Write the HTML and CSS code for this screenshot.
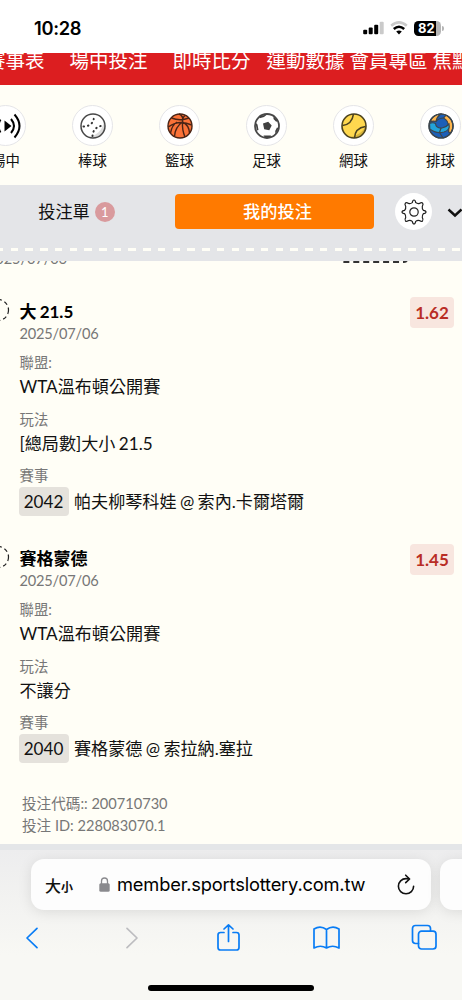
FILE: index.html
```html
<!DOCTYPE html>
<html lang="zh-Hant">
<head>
  <meta charset="UTF-8">
  <title>我的投注</title>
  <link rel="stylesheet" href="styles.css">
</head>
<body>

  <header class="status">
    <span class="time">10:28</span>
    <div class="status-icons">
      <svg width="21" height="14" viewBox="0 0 21 14">
        <rect x="0.2" y="8.8" width="4" height="4.4" rx="1"/>
        <rect x="5.7" y="6.4" width="4" height="6.8" rx="1"/>
        <rect x="11.2" y="3.7" width="4" height="9.5" rx="1"/>
        <rect x="16.7" y="0.8" width="4" height="12.4" rx="1" fill="#cacaca"/>
      </svg>
      <svg width="18" height="14" viewBox="0 0 18 14" fill="none">
        <path d="M1.2 4.8Q9 -2 16.8 4.8" stroke="#cacaca" stroke-width="2.5"/>
        <path d="M3.8 8Q9 3.6 14.2 8" stroke="#000" stroke-width="2.5"/>
        <path d="M6.2 10.6Q9 8.4 11.8 10.6L9 13.4Z" fill="#000"/>
      </svg>
      <div class="battery">82</div>
    </div>
  </header>

  <nav class="menu">
    <span>賽事表</span>
    <span>場中投注</span>
    <span>即時比分</span>
    <span class="tight">運動數據</span>
    <span class="tight">會員專區</span>
    <span>焦點</span>
  </nav>

  <section class="sports">
    <div class="sport">
      <div class="ball">
        <svg width="32" height="26" viewBox="0 0 32 26" fill="none" stroke="#000" stroke-width="2">
          <path d="M14.5 7.5V18.5L21.5 13Z" fill="#000" stroke="none"/>
          <path d="M10.5 6.5Q6.5 13 10.5 19.500M7 3Q1 13 7 23M21 6Q27 13 21 20M24.500 1.500Q34.500 13 24.500 24.500"/>
        </svg>
      </div>
      <span>場中</span>
    </div>
    <div class="sport">
      <div class="ball">
        <svg width="26" height="26" viewBox="0 0 26 26" fill="none">
          <circle cx="13" cy="13" r="12" fill="#fff"/>
          <path d="M24 8A12 12 0 0 1 9 24Q22 21 24 8" fill="#ddd"/>
          <circle cx="13" cy="13" r="12" stroke="#484848" stroke-width="1.5"/>
          <path d="M3.5 13.5Q14 13 14 3M12.5 23Q13 14 23 12.5" stroke="#333" stroke-width="2" stroke-linecap="round" stroke-dasharray="0.5 4"/>
        </svg>
      </div>
      <span>棒球</span>
    </div>
    <div class="sport">
      <div class="ball">
        <svg width="26" height="26" viewBox="0 0 26 26" fill="none" stroke="#4a2416" stroke-width="1.4">
          <circle cx="13" cy="13" r="12" fill="#fb7238"/>
          <path d="M4.5 5Q13 8.5 22 5M1.2 14Q12 6 24.8 12M12 1Q17 3 15.5 9Q15 17 18 24M15.5 9Q8 14 7.5 23.5M3.5 20Q5 12 10 9M15.5 9Q22 12 22.5 20M18 2.5Q15 5 15.5 9"/>
        </svg>
      </div>
      <span>籃球</span>
    </div>
    <div class="sport">
      <div class="ball">
        <svg width="26" height="26" viewBox="0 0 26 26">
          <circle cx="13" cy="13" r="12" fill="#fff" stroke="#484848" stroke-width="1.8"/>
          <path d="M9 10.5L14.2 8.7L17.7 12.6L15.3 17.2L10.2 16.2ZM6 3.2L13.3 1.3L10 3.900L5.700 5.300ZM19.500 3.200L23.700 8L22.200 8.700L19.500 6ZM24.600 15L21.500 21.500L21.200 18L23 14.500ZM16.500 22.500L18.500 23.500L11 24.800L9.500 22.500ZM1.500 9.500L3.500 11.500L4.500 17L2.800 17.500Z" fill="#404040"/>
        </svg>
      </div>
      <span>足球</span>
    </div>
    <div class="sport">
      <div class="ball">
        <svg width="26" height="26" viewBox="0 0 26 26" fill="none">
          <circle cx="13" cy="13" r="12" fill="#ffd84f"/>
          <path d="M25 12A12 12 0 0 1 9 24Q21 22 25 12" fill="#d8b53c"/>
          <path d="M1.5 12.5Q11 11.5 12.5 1M24.5 13.5Q14 15 13.5 25" stroke="#4b421f" stroke-width="1.6"/>
          <circle cx="13" cy="13" r="12" stroke="#4b421f" stroke-width="1.6"/>
        </svg>
      </div>
      <span>網球</span>
    </div>
    <div class="sport">
      <div class="ball">
        <svg width="26" height="26" viewBox="0 0 26 26" stroke="#3c464e" stroke-width="1.2">
          <circle cx="13" cy="13" r="12" fill="#1c5fb8"/>
          <path d="M3.500 6Q7 1.500 12.500 1Q8.500 4.500 8 8.500Q5 7.500 2.300 9Z" fill="#ffb64d"/>
          <path d="M15.500 5Q22 8 20.500 19L23 19.500A12 12 0 0 0 18 2.200Z" fill="#ffb64d"/>
          <path d="M1.500 10.500Q5 9 7.500 10.500Q8 15.500 14 15Q18 14.500 21 11Q22.500 17 16 19Q8 21 1.800 16Z" fill="#22a3da"/>
          <path d="M8 8.500Q11 5 15.500 5M13 15L11.500 19.500L15 24.800" fill="none"/>
          <circle cx="13" cy="13" r="12" fill="none"/>
        </svg>
      </div>
      <span>排球</span>
    </div>
  </section>

  <section class="slip-bar">
    <div class="tabs">
      <div class="tab">投注單 <span class="count">1</span></div>
      <button class="tab-active">我的投注</button>
      <div class="gear">
        <svg width="26" height="26" viewBox="0 0 26 26" fill="none" stroke="#222" stroke-width="1.2" stroke-linejoin="round">
          <path d="M11.3 3.6Q11.7 1 13 1Q14.3 1 14.7 3.6Q16.6 5 18.5 4.4Q20.5 3.1 21.5 4Q22.7 5.3 21.3 7.3Q20.9 9.6 22.4 11.3Q25 11.7 25 13Q25 14.3 22.4 14.7Q20.9 16.5 21.3 18.7Q22.7 20.7 21.5 22Q20.5 22.9 18.5 21.6Q16.5 21 14.7 22.4Q14.3 25 13 25Q11.7 25 11.3 22.4Q9.5 21 7.5 21.6Q5.5 22.9 4.5 22Q3.3 20.7 4.7 18.7Q5.1 16.5 3.6 14.7Q1 14.3 1 13Q1 11.7 3.6 11.3Q5.1 9.5 4.7 7.3Q3.3 5.3 4.5 4Q5.5 3.1 7.5 4.4Q9.5 5 11.3 3.6Z"/>
          <circle cx="13" cy="13" r="4.2"/>
        </svg>
      </div>
      <svg class="chevron" width="16" height="10" viewBox="0 0 16 10" fill="none" stroke="#111" stroke-width="2.400">
        <path d="M1.500 1.500L8 7.500L14.500 1.500"/>
      </svg>
    </div>
    <div class="perforation"></div>
  </section>

  <main class="bets">
    <div class="previous">
      <span>2025/07/06</span>
      <div class="cut-box"></div>
    </div>

    <article class="bet">
      <div class="bet-head">
        <svg class="ring" width="24" height="24" viewBox="0 0 24 24"><circle cx="12" cy="12" r="10.5"/></svg>
        <div>
          <h3>大 21.5</h3>
          <p class="date">2025/07/06</p>
        </div>
        <span class="odds">1.62</span>
      </div>
      <dl>
        <dt>聯盟:</dt>
        <dd>WTA溫布頓公開賽</dd>
        <dt>玩法</dt>
        <dd>[總局數]大小 21.5</dd>
        <dt>賽事</dt>
        <dd class="match"><span class="code">2042</span>帕夫柳琴科娃 @ 索內.卡爾塔爾</dd>
      </dl>
    </article>

    <article class="bet">
      <div class="bet-head">
        <svg class="ring" width="24" height="24" viewBox="0 0 24 24"><circle cx="12" cy="12" r="10.5"/></svg>
        <div>
          <h3>賽格蒙德</h3>
          <p class="date">2025/07/06</p>
        </div>
        <span class="odds">1.45</span>
      </div>
      <dl>
        <dt>聯盟:</dt>
        <dd>WTA溫布頓公開賽</dd>
        <dt>玩法</dt>
        <dd>不讓分</dd>
        <dt>賽事</dt>
        <dd class="match"><span class="code">2040</span>賽格蒙德 @ 索拉納.塞拉</dd>
      </dl>
    </article>

    <div class="ids">
      <p>投注代碼:: 200710730</p>
      <p>投注 ID: 228083070.1</p>
    </div>
  </main>

  <footer class="browser">
    <div class="address-row">
      <div class="address">
        <span class="text-size">大<small>小</small></span>
        <svg width="11" height="15" viewBox="0 0 11 15">
          <rect x="0.3" y="6.2" width="10.4" height="8.5" rx="1.5" fill="#8a8a8e"/>
          <path d="M2.5 7V4A3 3 0 0 1 8.5 4V7" fill="none" stroke="#8a8a8e" stroke-width="1.3"/>
        </svg>
        <span class="url">member.sportslottery.com.tw</span>
        <svg class="reload" width="18" height="22" viewBox="0 0 18 22" fill="none" stroke="#111" stroke-width="1.6" stroke-linecap="round" stroke-linejoin="round">
          <path d="M12.2 5Q10.8 4.6 9 4.6A7.6 7.6 0 1 0 16.6 12.2M8.7 1.2L12.6 5L8.7 8.7"/>
        </svg>
      </div>
      <div class="address next"></div>
    </div>
    <div class="toolbar">
      <svg width="30" height="30" viewBox="0 0 30 30"><path d="M21 5.3L11 15L21 24.7"/></svg>
      <svg class="off" width="30" height="30" viewBox="0 0 30 30"><path d="M12 5.3L22 15L12 24.7"/></svg>
      <svg width="30" height="30" viewBox="0 0 30 30"><path d="M11 9.5H7.5Q5 9.5 5 12V24.5Q5 27 7.5 27H23.5Q26 27 26 24.5V12Q26 9.5 23.5 9.5H20M15.5 18.5V2M11 6L15.500 1.800L20 6"/></svg>
      <svg width="30" height="30" viewBox="0 0 30 30"><path d="M14.500 6.500Q8.500 2 2 6V25Q8.500 21.500 14.500 25Q20.500 21.500 27 25V6Q20.500 2 14.500 6.500V25"/></svg>
      <svg width="30" height="30" viewBox="0 0 30 30"><path d="M8.500 20.500H5.500Q2.500 20.500 2.500 17.500V5.500Q2.500 2.500 5.500 2.500H17.500Q20.500 2.500 20.500 5.500V8"/><rect x="8.500" y="8.200" width="17.500" height="17.800" rx="3"/></svg>
    </div>
    <div class="home"></div>
  </footer>

</body>
</html>
```
FILE: styles.css
```css
* {
  box-sizing: border-box;
}

body {
  margin: 0;
  width: 462px;
  height: 1000px;
  overflow: hidden;
  background: #fffef6;
  color: #111;
  font-family: Lato, "Noto Sans CJK TC", sans-serif;
}

h3, p, dl, dd {
  margin: 0;
}

svg {
  display: block;
  flex-shrink: 0;
}

/* status bar */
.status {
  display: flex;
  justify-content: space-between;
  align-items: center;
  height: 53px;
  padding: 3px 21px 0 34px;
  background: #fff;
  color: #000;
  font-family: Inter, sans-serif;
}

.time {
  font-size: 18.3px;
  font-weight: 600;
  letter-spacing: -0.3px;
}

.status-icons {
  display: flex;
  align-items: center;
  gap: 6px;
}

.battery {
  position: relative;
  width: 27px;
  height: 15px;
  padding-left: 4px;
  border-radius: 4.5px;
  background: linear-gradient(to right, #000 22px, #b5b5b5 22px);
  color: #fff;
  font-size: 13px;
  font-weight: 700;
  line-height: 15px;
}

.battery::after {
  content: "";
  position: absolute;
  right: -3px;
  top: 5px;
  width: 2px;
  height: 5px;
  border-radius: 0 2px 2px 0;
  background: #b5b5b5;
}

/* red menu */
.menu {
  display: flex;
  align-items: flex-end;
  height: 32px;
  padding-bottom: 9px;
  margin-left: -14px;
  overflow: hidden;
  background: #dc1e20;
  color: #fff;
  font-size: 19.5px;
  line-height: 30px;
  white-space: nowrap;
}

.menu span {
  flex-shrink: 0;
  margin-right: 25px;
}

.menu span:nth-child(3) {
  margin-right: 16px;
}

.menu .tight {
  margin-right: 5px;
}

/* sports */
.sports {
  display: grid;
  grid-template-columns: repeat(6, 87px);
  height: 100px;
  margin-left: -38px;
  padding-top: 20px;
}

.sport {
  display: flex;
  flex-direction: column;
  align-items: center;
  font-size: 14.4px;
  line-height: 20px;
}

.ball {
  display: flex;
  align-items: center;
  justify-content: center;
  width: 41px;
  height: 41px;
  margin-bottom: 5px;
  border: 1px solid #e5e5e8;
  border-radius: 50%;
  background: #fff;
}

/* bet slip bar */
.slip-bar {
  height: 76px;
  padding-top: 8px;
  background: #e4e5e8;
}

.tabs {
  display: flex;
  align-items: center;
  height: 37px;
}

.tab {
  display: flex;
  flex-shrink: 0;
  align-items: center;
  justify-content: center;
  gap: 5px;
  width: 153px;
  margin-right: 22px;
  font-size: 17.2px;
  line-height: 34px;
}

.count {
  width: 20px;
  height: 20px;
  border-radius: 50%;
  background: #d99a9d;
  color: #fff;
  font-size: 13px;
  line-height: 20px;
  text-align: center;
}

.tab-active {
  flex-shrink: 0;
  width: 199px;
  height: 35px;
  padding: 0 0 0 6px;
  border: none;
  border-radius: 4px;
  background: #ff7a00;
  color: #fff;
  font: 500 17.2px/35px Lato, "Noto Sans CJK TC", sans-serif;
}

.gear {
  display: flex;
  flex-shrink: 0;
  align-items: center;
  justify-content: center;
  width: 37px;
  height: 37px;
  margin: 0 15px 0 21px;
  border-radius: 50%;
  background: #fff;
}

.chevron {
  margin-top: 2px;
}

.perforation {
  width: 480px;
  height: 3px;
  margin: 18px 0 0 -4px;
  background: repeating-linear-gradient(to right, #fffef6 0 7.5px, transparent 7.5px 14.72px);
}

/* bets */
.bets {
  height: 583px;
  overflow: hidden;
}

.previous {
  display: flex;
  justify-content: space-between;
  height: 40.3px;
  padding-right: 54px;
  margin-left: -13px;
  color: #777;
  font-size: 14.6px;
  line-height: 22px;
  letter-spacing: -0.1px;
}

.previous span {
  margin-top: -13px;
}

.cut-box {
  width: 68px;
  height: 21px;
  margin-top: -19px;
  border-bottom: 2px dashed #333;
  border-radius: 4px;
}

.bet {
  height: 246.8px;
  padding: 0 8px 0 19.5px;
}

.bet-head {
  display: flex;
  align-items: flex-start;
}

.ring {
  margin: -3px 10px 0 -34px;
  fill: none;
  stroke: #222;
  stroke-width: 1.2;
  stroke-dasharray: 4 3;
}

.bet h3 {
  font-size: 17px;
  font-weight: 700;
  line-height: 22px;
  word-spacing: -1px;
  color: #000;
}

.date {
  color: #777;
  font-size: 14.6px;
  line-height: 22px;
  letter-spacing: -0.2px;
}

.odds {
  width: 44px;
  height: 31px;
  margin: -4px 0 0 auto;
  border-radius: 4px;
  background: #f8e6df;
  color: #b92d25;
  font-size: 17px;
  font-weight: 700;
  line-height: 31px;
  text-align: center;
}

.bet dl {
  margin-top: 7.2px;
}

.bet dt {
  color: #777;
  font-size: 14.4px;
  line-height: 22px;
}

.bet dd {
  margin-bottom: 9.5px;
  font-size: 17.1px;
  line-height: 25px;
  word-spacing: -1px;
  white-space: nowrap;
}

.bet .match {
  display: flex;
  align-items: center;
  gap: 5.5px;
  margin: 0 0 0 -1px;
  line-height: 29px;
}

.code {
  width: 50px;
  height: 29px;
  border-radius: 4px;
  background: #e5e2dc;
  text-align: center;
}

.ids {
  margin-top: -2px;
  padding-left: 22px;
  color: #777;
  font-size: 14.6px;
  line-height: 22px;
}

/* browser bar */
.browser {
  height: 156px;
  border-top: 6px solid #e4e6e8;
  background: linear-gradient(#ededee, #f8f8f4 70%);
  overflow: hidden;
}

.address-row {
  display: flex;
  gap: 9px;
  width: 500px;
  padding: 9px 0 0 31px;
}

.address {
  display: flex;
  flex-shrink: 0;
  align-items: center;
  width: 400px;
  height: 51px;
  padding-left: 14px;
  border-radius: 13px;
  background: #fdfdfd;
  box-shadow: 0 2px 14px rgba(0, 0, 0, 0.1);
}

.text-size {
  width: 54px;
  font-size: 16px;
  font-weight: 500;
}

.text-size small {
  font-size: 12px;
  font-weight: 700;
}

.url {
  width: 280px;
  margin: -2px 0 0 7px;
  color: #000;
  font-family: Inter, sans-serif;
  font-size: 18.3px;
  letter-spacing: -0.18px;
}

.toolbar {
  display: flex;
  justify-content: space-between;
  width: 424px;
  margin: 13px 0 0 16px;
}

.toolbar svg {
  fill: none;
  stroke: #087cf5;
  stroke-width: 1.7;
  stroke-linecap: round;
  stroke-linejoin: round;
}

.toolbar .off {
  stroke: #bdbdc0;
}

.home {
  width: 166px;
  height: 6px;
  margin: 32px 0 0 148px;
  border-radius: 3px;
  background: #000;
}
```
